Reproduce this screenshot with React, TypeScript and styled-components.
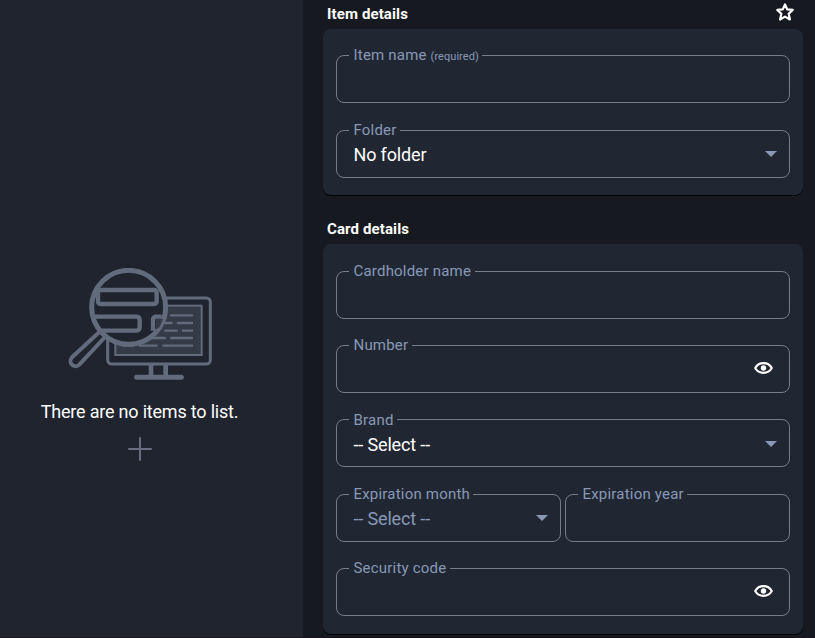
import React from "react";
import styled, { createGlobalStyle } from "styled-components";

const Global = createGlobalStyle`
  * { box-sizing: border-box; }
  body { margin: 0; background: #161920; font-family: Roboto, "Liberation Sans", sans-serif; overflow: hidden; }
`;

const Page = styled.div`
  display: flex;
  width: 815px;
  height: 638px;
  border-bottom: 1px solid #191320;
  background: #161920;
`;

const ListPane = styled.aside`
  display: flex;
  flex-direction: column;
  align-items: center;
  width: 303px;
  padding: 268px 24px 0 0;
  background: #20242e;
`;

const Illustration = styled.svg`
  display: block;
  width: 145px;
  height: 113px;
  margin-left: 2px;
`;

const EmptyText = styled.p`
  margin: 19px 0 0;
  font-size: 18px;
  line-height: 24px;
  letter-spacing: -0.2px;
  color: #fff;
`;

const AddButton = styled.button`
  display: flex;
  margin: 13px 0 0 1px;
  padding: 0;
  border: 0;
  background: none;
  color: #686d81;
`;

const EditPane = styled.main`
  display: flex;
  flex-direction: column;
  flex: 1;
  padding: 0 12px 0 20px;
`;

const SectionHeader = styled.header<{ $height: number }>`
  display: flex;
  flex-shrink: 0;
  justify-content: space-between;
  align-items: flex-end;
  height: ${(p) => p.$height}px;
  padding: 0 9px 5px 4px;
`;

const SectionTitle = styled.h2`
  margin: 0;
  font-size: 15px;
  font-weight: 700;
  line-height: 20px;
  letter-spacing: 0.12px;
  color: #fff;
`;

const IconButton = styled.button`
  display: flex;
  padding: 0;
  border: 0;
  background: none;
  color: #fff;
`;

const StarButton = styled(IconButton)`
  margin-bottom: 3px;
`;

const Card = styled.section<{ $height: number; $top: number }>`
  display: flex;
  flex-direction: column;
  flex-shrink: 0;
  gap: 17.25px;
  height: ${(p) => p.$height}px;
  padding: ${(p) => p.$top}px 13px 0;
  border-radius: 8px;
  background: #212732;
  box-shadow: 0 1px 0 #000;
`;

const FieldRow = styled.div`
  display: grid;
  grid-template-columns: 225px 225px;
  gap: 4px;
`;

const FieldBox = styled.fieldset`
  height: 57px;
  min-width: 0;
  margin: 0;
  padding: 0 12px;
  border: 1px solid #777d88;
  border-radius: 8px;
`;

const Legend = styled.legend`
  height: 19px;
  padding: 0.15px 3.5px 0 4.5px;
  font-size: 15px;
  line-height: 19px;
  letter-spacing: 0.2px;
  white-space: nowrap;
  color: #8898b5;
`;

const Required = styled.small`
  font-size: 11px;
  letter-spacing: 0.05px;
`;

const FieldContent = styled.div`
  display: flex;
  align-items: center;
  justify-content: space-between;
  height: 28px;
  padding-left: 4.5px;
`;

const Value = styled.span<{ $muted?: boolean }>`
  padding-top: 2.3px;
  font-size: 18px;
  line-height: 24px;
  letter-spacing: -0.15px;
  color: ${(p) => (p.$muted ? "#8898b5" : "#fff")};
`;

const Caret = styled.svg`
  display: block;
  width: 12px;
  height: 6px;
  margin-top: 0.3px;
`;

const EyeButton = styled(IconButton)`
  margin: 0 4px 1.5px auto;
`;

const Eye = () => (
  <svg width="19" height="12" viewBox="0 0 19 12">
    <path d="M1.2 6C3 2.8 6 1.1 9.5 1.1S16 2.8 17.8 6C16 9.2 13 10.9 9.5 10.9S3 9.2 1.2 6Z" fill="none" stroke="currentColor" strokeWidth="2.1" strokeLinejoin="round" />
    <circle cx="9.5" cy="6" r="2.7" fill="currentColor" />
  </svg>
);

type FieldProps = {
  label: string;
  required?: boolean;
  value?: string;
  muted?: boolean;
  select?: boolean;
  secret?: boolean;
};

const Field = ({ label, required, value, muted, select, secret }: FieldProps) => (
  <FieldBox>
    <Legend>
      {label} {required && <Required>(required)</Required>}
    </Legend>
    <FieldContent>
      {value && <Value $muted={muted}>{value}</Value>}
      {select && (
        <Caret viewBox="0 0 12 6">
          <path d="M0 0H12L6 6Z" fill="#8898b5" />
        </Caret>
      )}
      {secret && (
        <EyeButton aria-label="Toggle visibility">
          <Eye />
        </EyeButton>
      )}
    </FieldContent>
  </FieldBox>
);

const EmptyIllustration = () => (
  <Illustration viewBox="54 39 435 339" fill="none" stroke="#626b7c" strokeLinecap="round">
    <rect x="173" y="129" width="308" height="198" rx="12" strokeWidth="9" />
    <rect x="196" y="152" width="259" height="148" fill="#353a47" strokeWidth="6" />
    <path d="M363 181H426M346 204H365M383 204H426M346 227H380M399 227H426M300 249H345M363 249H426M220 272H250M270 272H320M340 272H426" strokeWidth="7" />
    <path d="M303 330V362M347 330V362" strokeWidth="14" strokeLinecap="butt" />
    <path d="M260 367H394" strokeWidth="15" />
    <path d="M149 230L66 307A14 14 0 0 0 88 329L168 243Z" fill="#20242e" strokeWidth="12" strokeLinejoin="round" />
    <circle cx="236" cy="157" r="111" fill="#20242e" strokeWidth="15" />
    <rect x="144" y="105" width="176" height="42" rx="7" strokeWidth="13" />
    <path d="M134 185H258Q269 185 269 195V216Q269 227 258 227H147M335 185H319Q309 185 309 195V227" strokeWidth="13" strokeLinecap="butt" />
    <path d="M317 192H339L329 216L317 224Z" fill="#353a47" stroke="none" />
  </Illustration>
);

export default function App() {
  return (
    <Page>
      <Global />
      <ListPane>
        <EmptyIllustration />
        <EmptyText>There are no items to list.</EmptyText>
        <AddButton aria-label="Add item">
          <svg width="24" height="24" viewBox="0 0 24 24">
            <path d="M12 1V23M1 12H23" stroke="currentColor" strokeWidth="2" strokeLinecap="round" />
          </svg>
        </AddButton>
      </ListPane>
      <EditPane>
        <SectionHeader $height={29}>
          <SectionTitle>Item details</SectionTitle>
          <StarButton aria-label="Favorite">
            <svg width="18" height="18" viewBox="0 0 18 18">
              <path d="M9 1.5L11.2 6.3L16.7 6.9L12.7 10.7L13.9 16.5L9 13.6L4.1 16.5L5.3 10.7L1.3 6.9L6.8 6.3Z" fill="none" stroke="currentColor" strokeWidth="2.2" strokeLinejoin="round" />
            </svg>
          </StarButton>
        </SectionHeader>
        <Card $height={166} $top={17.3}>
          <Field label="Item name" required />
          <Field label="Folder" value="No folder" select />
        </Card>
        <SectionHeader $height={49}>
          <SectionTitle>Card details</SectionTitle>
        </SectionHeader>
        <Card $height={390} $top={17.9}>
          <Field label="Cardholder name" />
          <Field label="Number" secret />
          <Field label="Brand" value="-- Select --" select />
          <FieldRow>
            <Field label="Expiration month" value="-- Select --" muted select />
            <Field label="Expiration year" />
          </FieldRow>
          <Field label="Security code" secret />
        </Card>
      </EditPane>
    </Page>
  );
}
